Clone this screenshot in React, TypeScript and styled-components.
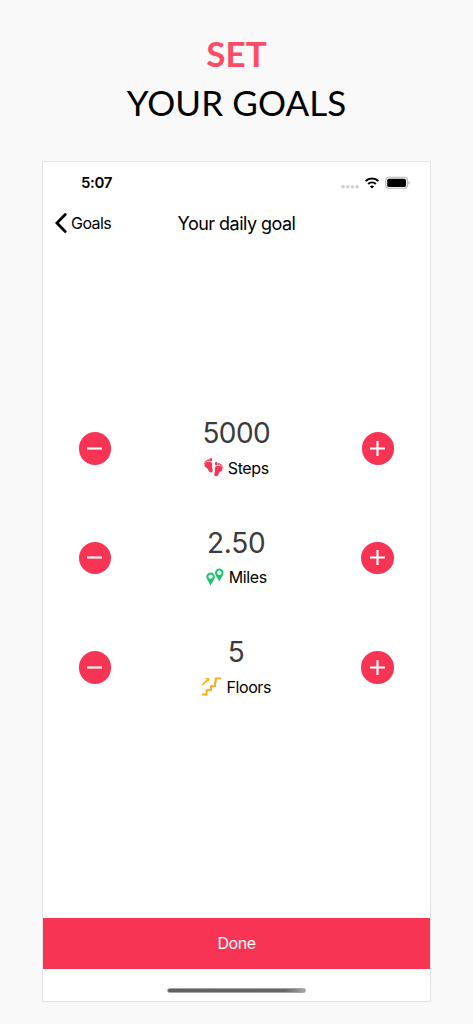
import React from 'react';
import styled, { createGlobalStyle } from 'styled-components';

const GlobalStyle = createGlobalStyle`
  * { box-sizing: border-box; }
  body { margin: 0; background: #f9f9f9; }
  svg { display: block; flex: none; }
  button { border: 0; padding: 0; margin: 0; background: none; color: inherit; font: inherit; }
`;

const Page = styled.main`
  height: 1024px;
  display: flex;
  flex-direction: column;
  align-items: center;
  background: #f9f9f9;
  font-family: Inter, 'Liberation Sans', sans-serif;
  color: #000;
`;

const Headline = styled.h1`
  margin: 0;
  height: 161px;
  padding-top: 29px;
  display: flex;
  flex-direction: column;
  align-items: center;
  font: 400 35px/49px Lato, sans-serif;
  white-space: nowrap;
`;

const HeadlineText = styled.span<{ $accent?: boolean }>`
  color: ${(p) => (p.$accent ? '#fd4b66' : '#000')};
  font-weight: ${(p) => (p.$accent ? 700 : 400)};
  letter-spacing: ${(p) => (p.$accent ? '0' : '0.1px')};
`;

const Phone = styled.section`
  width: 389px;
  height: 841px;
  display: flex;
  flex-direction: column;
  background: #fff;
  border: 1px solid #e2e2e2;
`;

const StatusBar = styled.div`
  height: 41px;
  padding: 0 20px 0 38px;
  display: flex;
  align-items: center;
  justify-content: space-between;
`;

const Clock = styled.span`
  font-size: 15px;
  font-weight: 600;
  letter-spacing: -0.35px;
`;

const NavBar = styled.header`
  height: 40px;
  padding: 0 12px;
  display: grid;
  grid-template-columns: 1fr auto 1fr;
  align-items: center;
`;

const BackButton = styled.button`
  display: flex;
  align-items: center;
  gap: 4px;
  font-size: 16px;
  letter-spacing: -0.55px;
`;

const Title = styled.h2`
  margin: 0;
  font-size: 18px;
  font-weight: 400;
  letter-spacing: -0.53px;
  white-space: nowrap;
`;

const GoalList = styled.div`
  flex: 1;
  padding-top: 150.5px;
`;

const GoalRow = styled.div`
  height: 109.5px;
  padding: 0 36px 0 35.5px;
  display: flex;
  align-items: center;
  justify-content: space-between;
`;

const RoundButton = styled.button`
  width: 32.5px;
  height: 32.5px;
  display: grid;
  place-items: center;
  border-radius: 50%;
  background: #f73454;
`;

const GoalInfo = styled.div`
  display: flex;
  flex-direction: column;
  align-items: center;
`;

const Amount = styled.span<{ $spacing: number }>`
  font-size: 28px;
  line-height: 39px;
  color: #3b3b3c;
  font-weight: 400;
  letter-spacing: ${(p) => p.$spacing}px;
`;

const GoalLabel = styled.span`
  height: 29px;
  display: flex;
  align-items: center;
  gap: 5px;
  font-size: 16px;
  letter-spacing: -0.4px;
`;

const DoneButton = styled.button`
  height: 51px;
  padding-bottom: 1px;
  background: #f73454;
  color: #fff;
  font-size: 16px;
  letter-spacing: -0.5px;
`;

const HomeArea = styled.footer`
  height: 32px;
  padding-top: 19px;
  display: flex;
  justify-content: center;
`;

const HomeIndicator = styled.div`
  width: 139px;
  height: 5px;
  border-radius: 3px;
  border: 1px solid #a5a5a5;
  background: linear-gradient(90deg, #606060 0, #666 85%, #a5a5a5 100%);
`;

const StatusIcons = () => (
  <svg width="70" height="14" viewBox="0 0 70 14">
    <g fill="#cfcfcf">
      {[3.1, 7.8, 12.5, 17.1].map((x) => <circle key={x} cx={x} cy="10.7" r="1.8" />)}
    </g>
    <g fill="none" stroke="#000" strokeWidth="2.1">
      <path d="M25.6 5.1a9.3 9.3 0 0 1 12.8 0" />
      <path d="M28.2 8a5.5 5.5 0 0 1 7.6 0" />
    </g>
    <path d="M32 12.5l-2.1-2.1a3.1 3.1 0 0 1 4.2 0z" fill="#000" />
    <rect x="45.8" y="1.3" width="21.6" height="11" rx="3" fill="#fff" stroke="#b5b5b5" strokeWidth="1.1" />
    <rect x="47.2" y="2.7" width="18.8" height="8.2" rx="1.7" />
    <path d="M68.5 4.9v3.8a2.1 2.1 0 0 0 0-3.8" fill="#aaa" />
  </svg>
);

const StepsIcon = () => (
  <svg width="19" height="19" viewBox="0 0 19 19" fill="#f73454">
    <path d="M.5 6.7C.7 4.6 2.6 3.7 4.7 3.8c2.4.1 3.8 1.5 3.5 3.4-.2 1.5-.5 2.3.1 3.6.8 1.5.7 3-.7 3.5-1.5.5-2.7-.5-3.2-2-.4-1.3-1-1.9-2-2.6C1.2 8.9.4 8 .5 6.7z" />
    <ellipse cx="6.7" cy="1.8" rx="1.4" ry="1.8" transform="rotate(8 6.7 1.8)" />
    <circle cx="4.1" cy="2.2" r="1" />
    <circle cx="2.4" cy="3" r=".85" />
    <circle cx="1.2" cy="4" r=".75" />
    <circle cx=".7" cy="5.2" r=".6" />
    <path d="M18.5 10.6c-.2-2.1-2.1-3-4.2-2.9-2.4.1-3.8 1.5-3.5 3.4.2 1.5.5 2.3-.1 3.6-.8 1.5-.7 3 .7 3.5 1.5.5 2.7-.5 3.2-2 .4-1.3 1-1.9 2-2.6 1.2-.8 2-1.7 1.9-3z" />
    <ellipse cx="12.3" cy="5.7" rx="1.4" ry="1.8" transform="rotate(-8 12.3 5.7)" />
    <circle cx="14.9" cy="6.1" r="1" />
    <circle cx="16.6" cy="6.9" r=".85" />
    <circle cx="17.8" cy="7.9" r=".75" />
    <circle cx="18.3" cy="9.1" r=".6" />
  </svg>
);

const MilesIcon = () => (
  <svg width="18" height="19" viewBox="0 0 18 19" fill="#19c567" fillRule="evenodd">
    <path d="M4.6 4.4a4.2 4.2 0 0 0-4.2 4.2c0 3.1 2.8 5.4 4.2 9.3 1.4-3.9 4.2-6.2 4.2-9.3a4.2 4.2 0 0 0-4.2-4.2zm0 2a2.2 2.2 0 1 1 0 4.4 2.2 2.2 0 0 1 0-4.4z" />
    <path d="M13.3.5a4.2 4.2 0 0 0-4.2 4.2c0 3 2.8 5.3 4.2 9.1 1.4-3.8 4.2-6.1 4.2-9.1A4.2 4.2 0 0 0 13.3.5zm0 2a2.2 2.2 0 1 1 0 4.4 2.2 2.2 0 0 1 0-4.4z" />
  </svg>
);

const FloorsIcon = () => (
  <svg width="20" height="19" viewBox="0 0 20 19" fill="none" stroke="#fbac18" strokeWidth="1.9">
    <path d="M1 17.5h4.6v-4.3h4.4V9.1h4.1V5.1h.6V1.4H20" />
    <path d="M1.2 8l5.6-5.2" strokeWidth="1.7" />
    <path d="M4.2 1h4v3.7z" fill="#fbac18" stroke="none" />
  </svg>
);

const Sign = ({ plus }: { plus?: boolean }) => (
  <svg width="17" height="17" viewBox="0 0 17 17" stroke="#fff" strokeWidth="2.1">
    <path d={plus ? 'M1 8.5h15M8.5 1v15' : 'M1 8.5h15'} />
  </svg>
);

const goals = [
  { name: 'Steps', amount: '5000', spacing: -0.6, icon: <StepsIcon /> },
  { name: 'Miles', amount: '2.50', spacing: -0.2, icon: <MilesIcon /> },
  { name: 'Floors', amount: '5', spacing: 0, icon: <FloorsIcon /> },
];

export default function App() {
  return (
    <Page>
      <GlobalStyle />
      <Headline>
        <HeadlineText $accent>SET</HeadlineText>
        <HeadlineText>YOUR GOALS</HeadlineText>
      </Headline>
      <Phone>
        <StatusBar>
          <Clock>5:07</Clock>
          <StatusIcons />
        </StatusBar>
        <NavBar>
          <BackButton>
            <svg width="12" height="20" viewBox="0 0 12 20" fill="none" stroke="#000" strokeWidth="2.8" strokeLinecap="round" strokeLinejoin="miter">
              <path d="M10.2 1.6L1.9 10l8.3 8.4" />
            </svg>
            Goals
          </BackButton>
          <Title>Your daily goal</Title>
        </NavBar>
        <GoalList>
          {goals.map((goal) => (
            <GoalRow key={goal.name}>
              <RoundButton aria-label={`Decrease ${goal.name}`}><Sign /></RoundButton>
              <GoalInfo>
                <Amount $spacing={goal.spacing}>{goal.amount}</Amount>
                <GoalLabel>{goal.icon}{goal.name}</GoalLabel>
              </GoalInfo>
              <RoundButton aria-label={`Increase ${goal.name}`}><Sign plus /></RoundButton>
            </GoalRow>
          ))}
        </GoalList>
        <DoneButton>Done</DoneButton>
        <HomeArea><HomeIndicator /></HomeArea>
      </Phone>
    </Page>
  );
}
